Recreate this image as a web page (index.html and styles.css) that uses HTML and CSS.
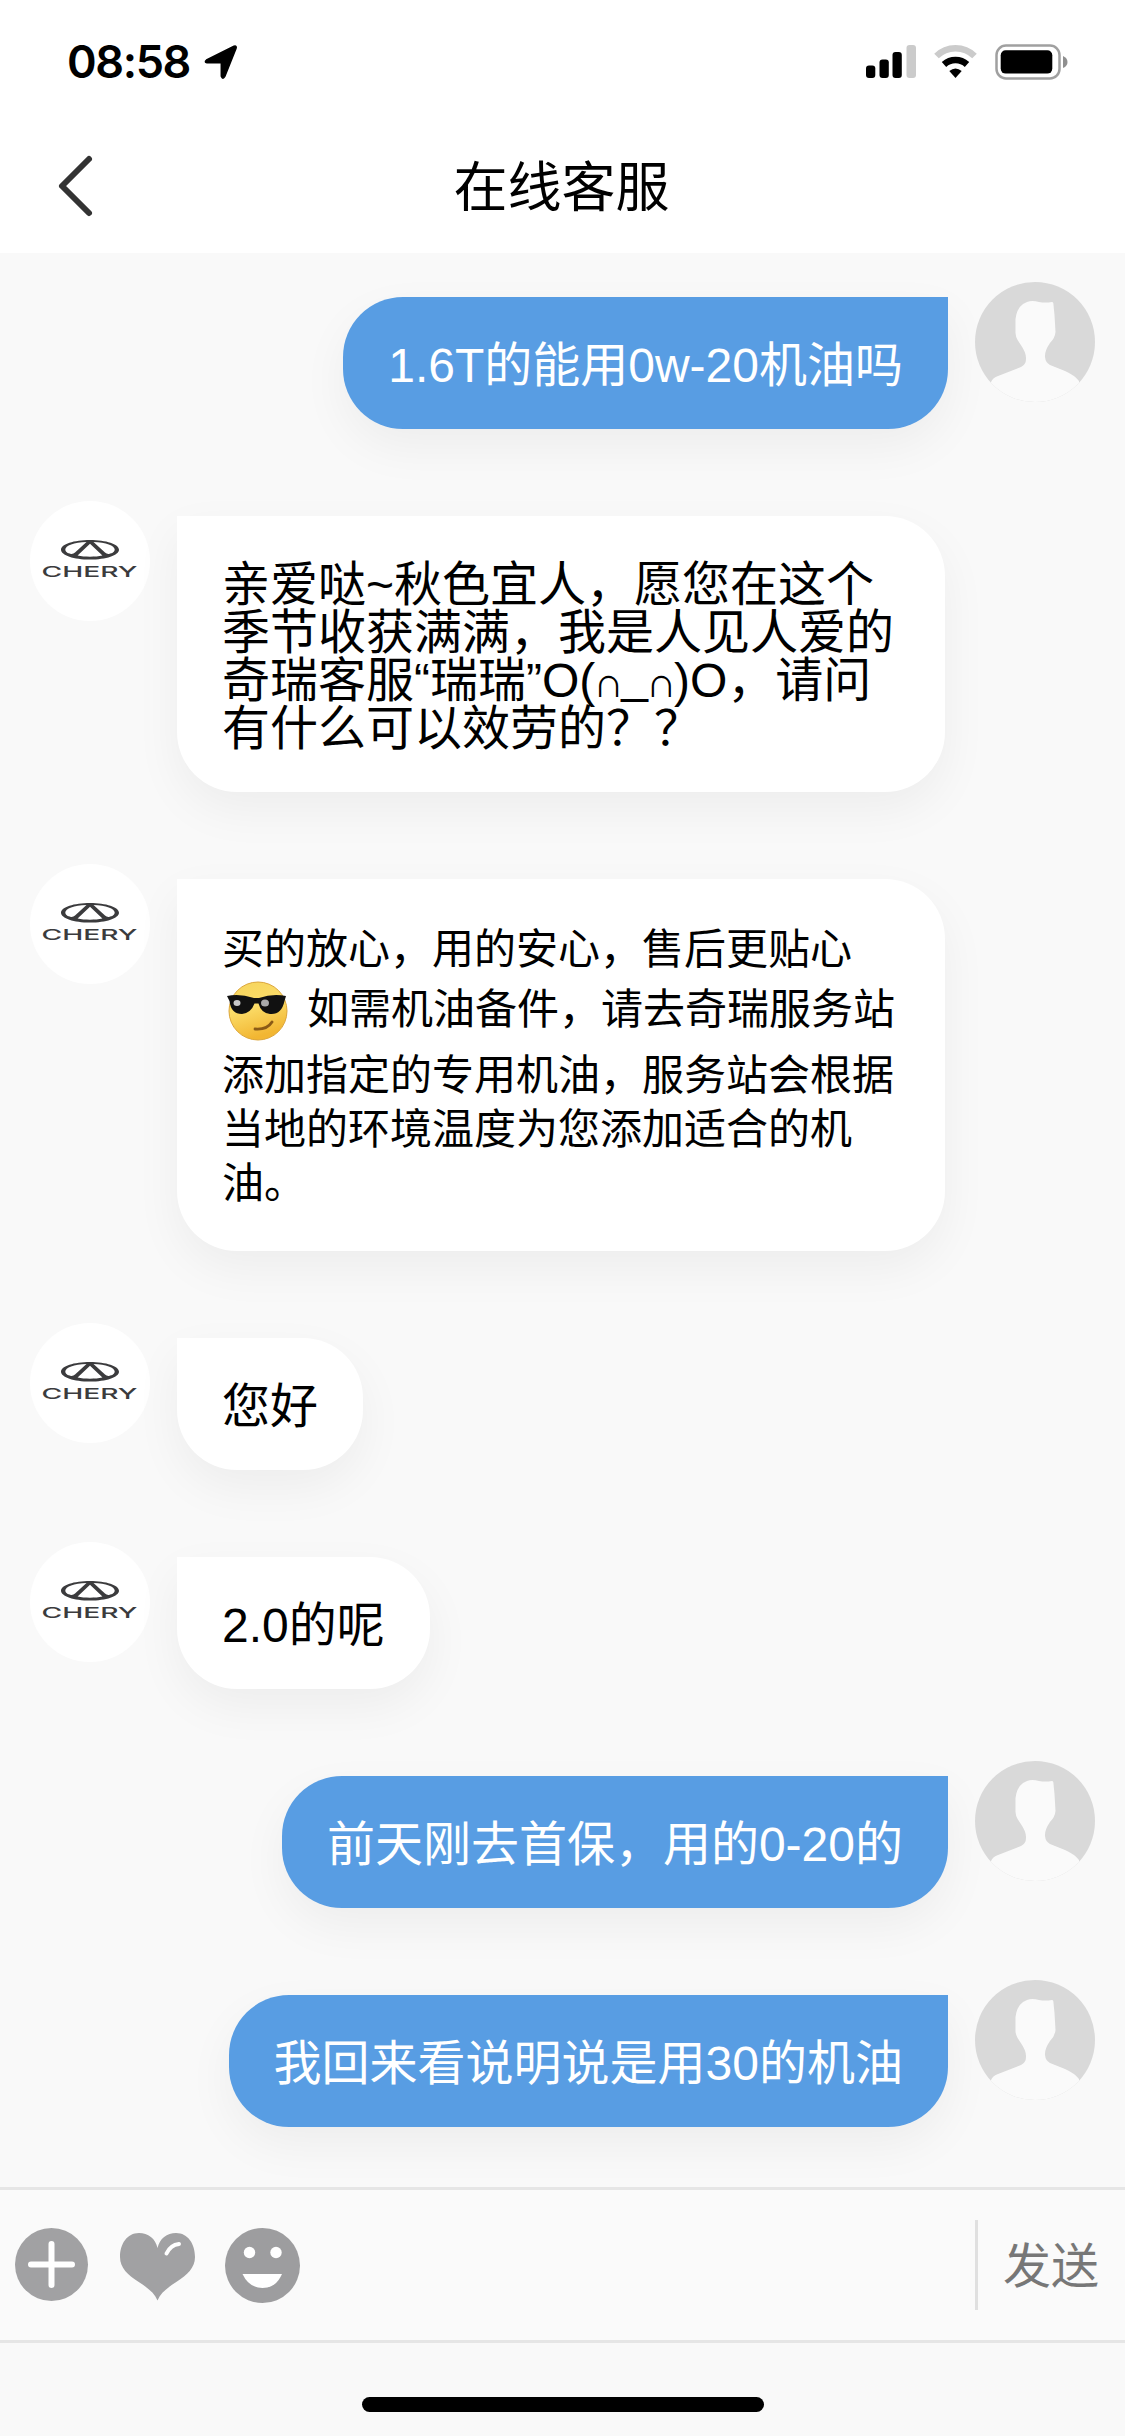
FILE: index.html
```html
<!DOCTYPE html>
<html lang="zh-CN">
<head>
<meta charset="utf-8">
<title>在线客服</title>
<link rel="stylesheet" href="styles.css">
</head>
<body>
<svg class="defs" width="0" height="0" aria-hidden="true">
  <defs>
    <linearGradient id="face" x1="0" y1="0" x2="0.3" y2="1">
      <stop offset="0" stop-color="#f6d45c"/>
      <stop offset="0.5" stop-color="#fbdc68"/>
      <stop offset="1" stop-color="#f2b632"/>
    </linearGradient>
    <clipPath id="round"><circle cx="60" cy="60" r="60"/></clipPath>
    <symbol id="agent" viewBox="0 0 120 120">
      <circle cx="60" cy="60" r="60" fill="#fff"/>
      <path fill="#3b3b3d" fill-rule="evenodd" d="M60 39c16 0 29 4.200 29 9.700S76 58.600 60 58.600 31 54.200 31 48.700 44 39 60 39zM56.500 41C44 41.500 35.300 44.600 35.300 48.600c0 2.200 2.300 4 5.700 4.300 1.800.1 2.900-.4 4-1.400zM63.500 41c12.500.5 21.200 3.600 21.200 7.600 0 2.200-2.300 4-5.700 4.300-1.800.1-2.900-.4-4-1.400zM60 42.800L47.600 54.600c7 1.600 17.800 1.600 24.800 0z"/>
      <text x="11.500" y="75.700" font-size="15" textLength="96" lengthAdjust="spacingAndGlyphs" class="brand">CHERY</text>
    </symbol>
    <symbol id="user" viewBox="0 0 120 120">
      <circle cx="60" cy="60" r="60" fill="#d9d9d9"/>
      <path clip-path="url(#round)" fill="#fafafa" d="M52 20Q57 18 64 20 70 21 77 20 78.500 20 78.500 23L79.500 33 80.500 50Q80 56 75 61 69.500 69 70 75 70.500 80.500 75 83L90 89Q100 93.500 104 99V121H16V100Q18 95.500 23 94L46 85Q51 82.500 51 77 51.500 71 45.500 62.500 40.500 56 40.500 51V37Q42 23.500 52 20z"/>
    </symbol>
  </defs>
</svg>
<div class="screen">
  <div class="status">
    <span class="time">08:58</span>
    <svg class="locate" width="34" height="36" viewBox="0 0 34 36"><path d="M2.500 16L30 2.200q3-.8 2 2.300L20.800 32.500q-2 3.500-3.500-.3V18.800H3q-3-.7-.5-2.800z" stroke="#000" stroke-width="1.500" stroke-linejoin="round"/></svg>
    <svg class="signals" width="204" height="36" viewBox="0 0 204 36">
      <rect x="1" y="21.500" width="9.300" height="12.500" rx="3"/>
      <rect x="14.500" y="15.500" width="9.300" height="18.500" rx="3"/>
      <rect x="27.500" y="8" width="9.300" height="26" rx="3"/>
      <rect x="41.500" y="1" width="9.500" height="33" rx="3" fill="#cbcbcb"/>
      <path d="M71.500 12a27 27 0 0 1 38 0" fill="none" stroke="#cbcbcb" stroke-width="6.500"/>
      <path d="M79 20.500a17 17 0 0 1 23 0" fill="none" stroke="#000" stroke-width="6.500"/>
      <path d="M84.300 27q6.200-5 12.400 0L90.500 34z"/>
      <rect x="131.500" y="1.500" width="63" height="33" rx="9.500" fill="none" stroke="#a0a0a0" stroke-width="2.500"/>
      <rect x="135.700" y="6.200" width="51.600" height="23.400" rx="5"/>
      <path d="M198 12q4.500 2 4.500 6t-4.500 6z" fill="#8f8f8f"/>
    </svg>
  </div>
  <header class="nav">
    <svg class="back" width="40" height="66" viewBox="0 0 40 66"><path d="M34 6L7 33l27 27" fill="none" stroke="#333" stroke-width="6" stroke-linejoin="round" stroke-linecap="round"/></svg>
    <h1 class="title">在线客服</h1>
  </header>

  <main class="chat">
    <div class="row mine"><div class="bubble">1.6T的能用0w-20机油吗</div><svg class="avatar"><use href="#user"/></svg></div>
    <div class="row"><svg class="avatar"><use href="#agent"/></svg><div class="bubble wide">亲爱哒~秋色宜人，愿您在这个<br>季节收获满满，我是人见人爱的<br>奇瑞客服“瑞瑞”O(<span class="eye">∩</span><span class="mouth">_</span><span class="eye">∩</span>)O，请问<br>有什么可以效劳的？？</div></div>
    <div class="row"><svg class="avatar"><use href="#agent"/></svg><div class="bubble wide rich">
      <p>买的放心，用的安心，售后更贴心</p>
      <p class="with-face"><svg class="emoji" width="72" height="72" viewBox="0 0 72 72">
        <circle cx="36" cy="36" r="29" fill="url(#face)" stroke="#dca63c" stroke-width="1"/>
        <path d="M5 21q12-3 27 2h5q14-5 27-2l-1.500 5q-3 14-14.500 13-9-1-11.500-10.500h-4Q29 38 20 39 9 39 7.500 26z" fill="#111"/>
        <ellipse cx="15" cy="28" rx="3.500" ry="3" fill="#c9c9c9"/><ellipse cx="43" cy="28" rx="4" ry="3.500" fill="#aaa"/>
        <path d="M33 54q12 1 17-7" fill="none" stroke="#8a5a16" stroke-width="2.800" stroke-linecap="round"/>
      </svg><span>如需机油备件，请去奇瑞服务站</span></p>
      <p>添加指定的专用机油，服务站会根据</p>
      <p>当地的环境温度为您添加适合的机</p>
      <p>油。</p>
    </div></div>
    <div class="row"><svg class="avatar"><use href="#agent"/></svg><div class="bubble">您好</div></div>
    <div class="row"><svg class="avatar"><use href="#agent"/></svg><div class="bubble">2.0的呢</div></div>
    <div class="row mine"><div class="bubble">前天刚去首保，用的0-20的</div><svg class="avatar"><use href="#user"/></svg></div>
    <div class="row mine"><div class="bubble">我回来看说明说是用30的机油</div><svg class="avatar"><use href="#user"/></svg></div>
  </main>

  <footer class="composer">
    <svg class="tool" width="75" height="75" viewBox="0 0 75 75"><circle cx="36.500" cy="36.500" r="36.500" fill="#a1a1a3"/><path d="M36.500 16v41M16 36.500h41" stroke="#fff" stroke-width="6" stroke-linecap="round"/></svg>
    <svg class="tool" width="75" height="75" viewBox="0 0 75 75"><path fill="#a1a1a3" d="M37.500 20C35.500 10.500 28 5 19 5 7 5 0 16 0 29 0 40 8 47 18 53.500 28 60 34.500 65 37.500 72.500 40.500 65 47 60 57 53.500 67 47 75 40 75 29 75 16 68 5 56 5 47 5 39.500 10.500 37.500 20z"/><path d="M46.500 25.500q4-8.500 12.500-9.500" fill="none" stroke="#fff" stroke-width="4" stroke-linecap="round"/></svg>
    <svg class="tool" width="75" height="75" viewBox="0 0 75 75"><circle cx="37.500" cy="37.500" r="37.500" fill="#9d9d9f"/><circle cx="24.500" cy="24.500" r="5.700" fill="#fff"/><circle cx="51" cy="24.500" r="5.700" fill="#fff"/><path d="M17.500 46H57q-6 14-19.500 14T17.500 46z" fill="#fff"/></svg>
    <div class="send">发送</div>
  </footer>
  <div class="home"><div class="bar"></div></div>
</div>
</body>
</html>
```
FILE: styles.css
```css
* { box-sizing: border-box; }
body, h1, p { margin: 0; }
body {
  width: 1125px;
  background: #f9f9f9;
  color: #000;
  font-family: "Liberation Sans", "Noto Sans CJK SC", sans-serif;
}
.defs { display: block; height: 0; }
.screen { display: flex; flex-direction: column; height: 2436px; }
.status {
  display: flex;
  align-items: flex-start;
  height: 120px;
  padding: 44px 56px 0 67px;
  background: #fff;
}
.time {
  width: 137px;
  font: 600 45px/36px Inter, sans-serif;
  letter-spacing: -1.4px;
}
.signals { margin-left: auto; }
.nav {
  display: grid;
  grid-template-columns: 100px 1fr 100px;
  align-items: center;
  height: 133px;
  margin-bottom: -1px;
  padding: 0 55px;
  background: #fff;
}
.back { margin-top: -2px; }
.title {
  padding: 3px 2px 0 0;
  text-align: center;
  font-size: 54px;
  font-weight: 400;
  line-height: 66px;
}
.chat {
  flex: none;
  display: flex;
  flex-direction: column;
  gap: 87px;
  height: 1935px;
  padding: 45px 30px 0;
  overflow: hidden;
}
.row { display: flex; align-items: flex-start; gap: 27px; }
.mine { justify-content: flex-end; }
.avatar {
  flex: none;
  width: 120px;
  height: 120px;
  margin: -15px 0 0;
}
.brand { font-family: Inter, sans-serif; font-weight: 500; fill: #3b3b3d; }
.bubble {
  padding: 45px 45px 39px;
  border-radius: 0 60px 60px 60px;
  background: #fff;
  font-size: 48px;
  line-height: 48px;
  white-space: nowrap;
  box-shadow: 0 18px 48px rgba(0, 0, 0, .05);
}
.mine .bubble {
  border-radius: 60px 0 60px 60px;
  background: #589de3;
  color: #fff;
}
.wide { width: 768px; }
.eye {
  display: inline-flex;
  justify-content: center;
  width: 26px;
  font-size: 42px;
  line-height: 1;
}
.mouth { line-height: 0; vertical-align: 5px; }
.rich { padding: 44px 45px 40px; font-size: 42px; line-height: 54px; }
.with-face { display: flex; gap: 13px; height: 72px; line-height: 65px; }
.emoji { margin-top: -2px; }
.composer {
  display: flex;
  align-items: center;
  gap: 30px;
  height: 156px;
  padding: 0 26px 0 15px;
  border: solid #e6e6e6;
  border-width: 3px 0;
  background: #fafafa;
}
.send {
  margin-left: auto;
  height: 90px;
  padding-left: 25px;
  border-left: 3px solid #e0e0e0;
  color: #777;
  font-size: 48px;
  line-height: 94px;
}
.home { display: flex; justify-content: center; padding-top: 54px; }
.bar { width: 402px; height: 15px; border-radius: 8px; background: #000; }
```
